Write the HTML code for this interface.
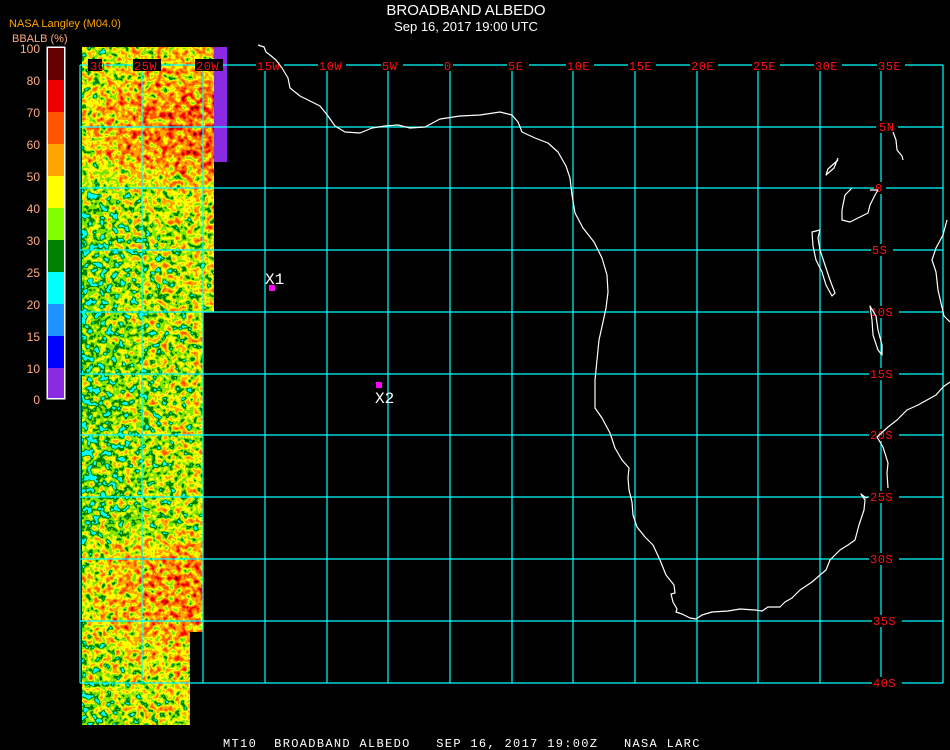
<!DOCTYPE html>
<html><head><meta charset="utf-8">
<style>
html,body{margin:0;padding:0;background:#000;}
body{width:950px;height:750px;overflow:hidden;position:relative;font-family:"Liberation Sans",sans-serif;}
svg{position:absolute;left:0;top:0;}
</style></head>
<body>
<svg width="950" height="750" viewBox="0 0 950 750" xmlns="http://www.w3.org/2000/svg">
<defs>
<linearGradient id="vb" x1="0" y1="0" x2="0" y2="1">
<stop offset="0" stop-color="#707070"/>
<stop offset="0.05" stop-color="#808080"/>
<stop offset="0.1" stop-color="#a0a0a0"/>
<stop offset="0.16" stop-color="#989898"/>
<stop offset="0.21" stop-color="#666666"/>
<stop offset="0.28" stop-color="#565656"/>
<stop offset="0.7" stop-color="#545454"/>
<stop offset="0.76" stop-color="#909090"/>
<stop offset="0.85" stop-color="#8c8c8c"/>
<stop offset="0.9" stop-color="#707070"/>
<stop offset="1" stop-color="#5a5a5a"/>
</linearGradient>
<linearGradient id="hb" x1="0" y1="0" x2="1" y2="0">
<stop offset="0" stop-color="#000" stop-opacity="0.3"/>
<stop offset="0.35" stop-color="#000" stop-opacity="0.05"/>
<stop offset="0.7" stop-color="#fff" stop-opacity="0.05"/>
<stop offset="1" stop-color="#fff" stop-opacity="0.12"/>
</linearGradient>
<filter id="pal" x="0" y="0" width="100%" height="100%" color-interpolation-filters="sRGB">
<feTurbulence type="fractalNoise" baseFrequency="0.16" numOctaves="2" seed="7" result="n"/>
<feColorMatrix in="n" type="matrix" values="1 0 0 0 0  1 0 0 0 0  1 0 0 0 0  0 0 0 0 1" result="g"/>
<feComposite in="g" in2="SourceGraphic" operator="arithmetic" k1="0" k2="1.1" k3="1" k4="-0.55" result="c"/>
<feComponentTransfer in="c">
<feFuncR type="discrete" tableValues="0 0 0.5 1 1 1 1 0.45"/>
<feFuncG type="discrete" tableValues="1 0.5 0.9 1 0.65 0.35 0 0"/>
<feFuncB type="discrete" tableValues="1 0 0 0 0 0 0 0"/>
<feFuncA type="discrete" tableValues="1"/>
</feComponentTransfer>
</filter>
<clipPath id="strip">
<path d="M82 47 H214 V312 H203 V632 H190 V725 H82 Z"/>
</clipPath>
</defs>

<g clip-path="url(#strip)">
<g filter="url(#pal)">
<rect x="82" y="47" width="133" height="680" fill="url(#vb)"/>
<rect x="82" y="47" width="133" height="680" fill="url(#hb)"/>
</g>
</g>
<rect x="214" y="47" width="13" height="115" fill="#8a2be2"/>

<g stroke="#00ffff" stroke-width="1.2" fill="none">
<path d="M80 65V683M142 65V683M203 65V683M265 65V683M327 65V683M388 65V683M450 65V683M512 65V683M573 65V683M635 65V683M697 65V683M758 65V683M820 65V683M881 65V683M943 65V683"/>
<path d="M80 65H943M80 127H943M80 188H943M80 250H943M80 312H943M80 374H943M80 435H943M80 497H943M80 559H943M80 621H943M80 683H943"/>
</g>

<g font-family="Liberation Mono,monospace" font-size="12" fill="#ff1010" letter-spacing="0.5">
<g fill="#000">
<rect x="88" y="59" width="14" height="12"/><rect x="133" y="59" width="28" height="12"/><rect x="195" y="59" width="28" height="12"/><rect x="256" y="59" width="28" height="12"/><rect x="318" y="59" width="28" height="12"/><rect x="381" y="59" width="22" height="12"/><rect x="443" y="59" width="10" height="12"/><rect x="507" y="59" width="22" height="12"/><rect x="566" y="59" width="28" height="12"/><rect x="628" y="59" width="28" height="12"/><rect x="690" y="59" width="28" height="12"/><rect x="752" y="59" width="28" height="12"/><rect x="814" y="59" width="28" height="12"/><rect x="877" y="59" width="28" height="12"/>
<rect x="876" y="121" width="22" height="12"/><rect x="874" y="182" width="12" height="12"/><rect x="871" y="244" width="22" height="12"/><rect x="869" y="306" width="30" height="12"/><rect x="869" y="368" width="30" height="12"/><rect x="869" y="429" width="30" height="12"/><rect x="869" y="491" width="30" height="12"/><rect x="869" y="553" width="30" height="12"/><rect x="872" y="615" width="30" height="12"/><rect x="872" y="677" width="30" height="12"/>
</g>
<text x="90" y="70">30</text>
<text x="134" y="70">25W</text><text x="196" y="70">20W</text><text x="257" y="70">15W</text><text x="319" y="70">10W</text><text x="382" y="70">5W</text><text x="444" y="70">0</text><text x="508" y="70">5E</text><text x="567" y="70">10E</text><text x="629" y="70">15E</text><text x="691" y="70">20E</text><text x="753" y="70">25E</text><text x="815" y="70">30E</text><text x="878" y="70">35E</text>
<text x="879" y="131">5N</text><text x="875" y="192">0</text><text x="872" y="254">5S</text><text x="870" y="316">10S</text><text x="870" y="378">15S</text><text x="870" y="439">20S</text><text x="870" y="501">25S</text><text x="870" y="563">30S</text><text x="873" y="625">35S</text><text x="873" y="687">40S</text>
</g>

<g stroke="#fff" stroke-width="1.2" fill="none" stroke-linejoin="round">
<path d="M258 45 L264 47 L266 52 L270 55 L276 60 L282 68 L288 78 L290 88 L300 96 L312 102 L320 106 L328 116 L335 126 L345 132 L360 133 L372 128 L385 126 L398 125 L410 128 L425 127 L440 119 L460 116 L480 115 L500 112 L512 115 L518 122 L522 132 L535 138 L548 143 L558 152 L566 166 L570 178 L572 195 L575 213 L583 228 L594 242 L602 258 L607 275 L608 292 L606 308 L603 322 L599 340 L597 360 L595 380 L595 408 L602 418 L610 433 L615 448 L622 460 L629 468 L628 478 L629 490 L632 502 L633 515 L637 527 L645 537 L653 545 L660 560 L666 575 L674 585 L675 593 L671 594 L673 602 L677 609 L676 612 L682 614 L690 618 L696 619 L702 615 L712 612 L728 611 L740 609 L755 610 L762 611 L768 607 L780 607 L785 602 L792 598 L800 590 L812 582 L820 575 L826 570 L830 560 L840 550 L848 545 L855 540 L859 525 L864 510 L865 500 L861 494 L866 498 L868 497"/>
<path d="M888 488 L887 473 L888 463 L883 447 L877 437 L888 427 L897 420 L907 410 L918 405 L927 400 L936 395 L943 387 L950 382"/>
<path d="M947 220 L943 235 L936 248 L932 260 L936 272 L938 290 L944 316 L950 322"/>
<path d="M893 132 L896 140 L897 150 L902 156 L903 160"/>
<path d="M838 158 L834 168 L826 175 L828 169 L838 160"/>
<path d="M852 188 L845 195 L842 210 L842 220 L850 222 L858 218 L868 213 L870 205 L875 195 L878 190 L870 190"/>
<path d="M820 230 L812 232 L813 246 L816 260 L822 272 L826 285 L832 296 L835 293 L830 280 L825 265 L820 250 L818 238 Z"/>
<path d="M870 306 L872 320 L873 335 L878 350 L882 355 L882 345 L878 330 L876 316 Z"/>
</g>

<rect x="269" y="285" width="6" height="6" fill="#ff00ff"/>
<rect x="376" y="382" width="6" height="6" fill="#ff00ff"/>
<g font-family="Liberation Mono,monospace" font-size="16" fill="#fff">
<text x="265" y="284">X1</text>
<text x="375" y="403">X2</text>
</g>

<rect x="46.5" y="46.5" width="19" height="353" fill="#fff"/>
<g>
<rect x="48" y="48" width="16" height="32" fill="#660000"/>
<rect x="48" y="80" width="16" height="32" fill="#ee0000"/>
<rect x="48" y="112" width="16" height="32" fill="#ff5500"/>
<rect x="48" y="144" width="16" height="32" fill="#ffa500"/>
<rect x="48" y="176" width="16" height="32" fill="#ffff00"/>
<rect x="48" y="208" width="16" height="32" fill="#80ff00"/>
<rect x="48" y="240" width="16" height="32" fill="#008000"/>
<rect x="48" y="272" width="16" height="32" fill="#00ffff"/>
<rect x="48" y="304" width="16" height="32" fill="#1e90ff"/>
<rect x="48" y="336" width="16" height="32" fill="#0000ff"/>
<rect x="48" y="368" width="16" height="30" fill="#8a2be2"/>
</g>
<g font-family="Liberation Sans,sans-serif" font-size="12" fill="#ffaa80" text-anchor="end">
<text x="40" y="53">100</text><text x="40" y="85">80</text><text x="40" y="117">70</text><text x="40" y="149">60</text><text x="40" y="181">50</text><text x="40" y="213">40</text><text x="40" y="245">30</text><text x="40" y="277">25</text><text x="40" y="309">20</text><text x="40" y="341">15</text><text x="40" y="373">10</text><text x="40" y="404">0</text>
</g>
<text x="9" y="27" font-size="11" fill="#ffa500">NASA Langley (M04.0)</text>
<text x="12" y="42" font-size="11" fill="#ffaa80">BBALB (%)</text>

<text x="466" y="15" font-size="15" fill="#fff" text-anchor="middle">BROADBAND ALBEDO</text>
<text x="466" y="31" font-size="13" fill="#fff" text-anchor="middle">Sep 16, 2017 19:00 UTC</text>
<text x="223" y="747" font-family="Liberation Mono,monospace" font-size="12" letter-spacing="1.33" fill="#fff" xml:space="preserve">MT10  BROADBAND ALBEDO   SEP 16, 2017 19:00Z   NASA LARC</text>
</svg>
</body></html>
